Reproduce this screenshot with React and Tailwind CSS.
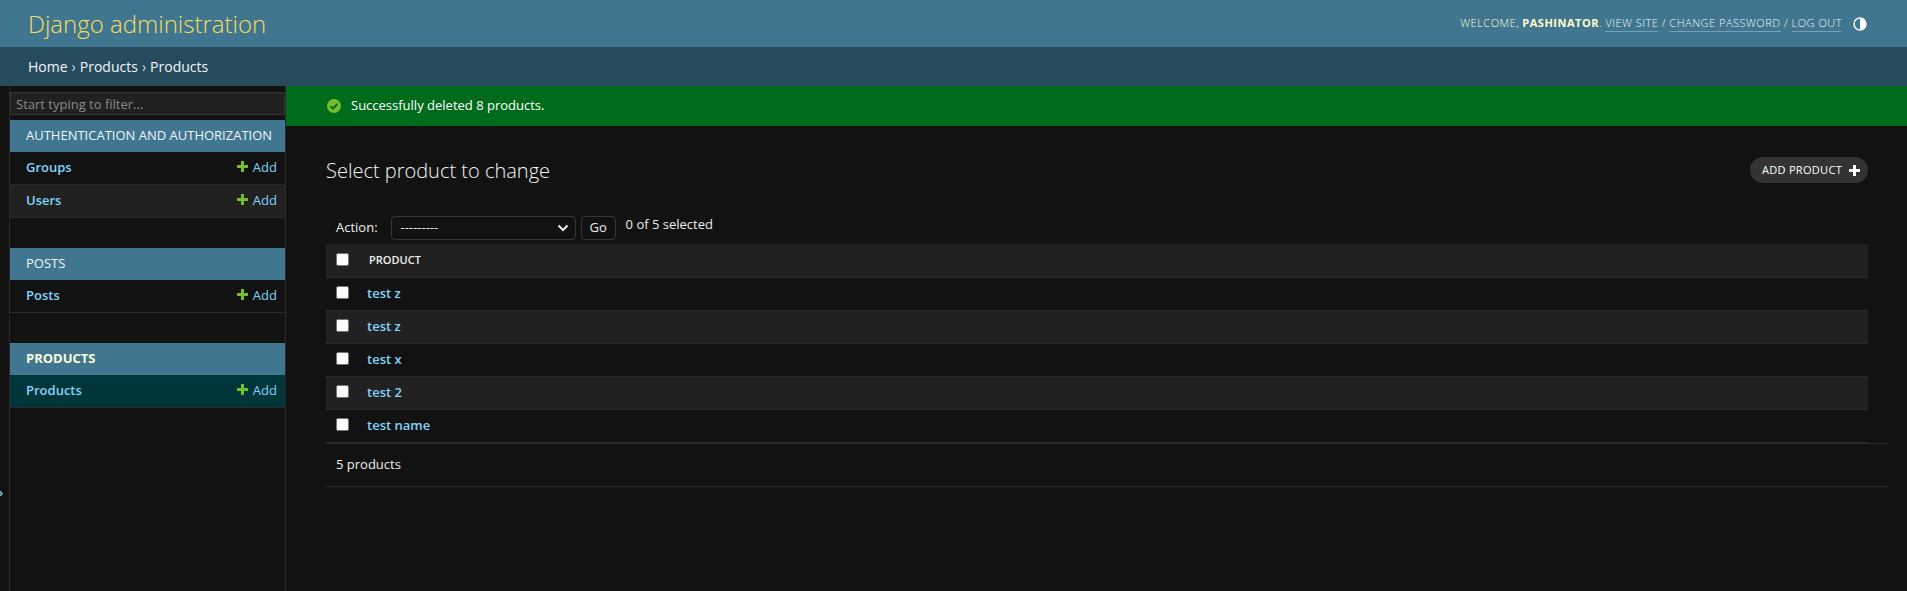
const font = "font-['Open_Sans','Noto_Sans',sans-serif]"

function NavGroup({ title, active, rows }) {
  return (
    <div className="mb-[30px]">
      <div className={`h-8 pl-4 flex items-center bg-[#417690] text-[13px] ${active ? 'font-bold text-[#f5dd5d]/0' : ''}`}>
        <span className={active ? 'text-[#fdfbd8]' : 'text-[#f0f5f7]'}>{title}</span>
      </div>
      {rows.map((r, i) => (
        <div
          key={r}
          className={`h-[33px] pl-4 pr-2 flex items-center justify-between border-b border-[#2a2a2a] ${
            active ? 'bg-[#00363a]' : i % 2 ? 'bg-[#212121]' : 'bg-[#121212]'
          }`}
        >
          <span className="text-[13px] font-semibold text-[#81d4fa]">{r}</span>
          <span className="flex items-center gap-[5px] text-[13px] text-[#81d4fa]">
            <svg width="11" height="11" viewBox="0 0 11 11" className="-mt-1">
              <path d="M4 0h3v4h4v3H7v4H4V7H0V4h4z" fill="#70bf2b" />
            </svg>
            Add
          </span>
        </div>
      ))}
    </div>
  )
}

function Row({ name, shaded }) {
  return (
    <div className={`h-[33px] flex items-center ${shaded ? 'bg-[#212121]' : ''} border-b border-[#2a2a2a]`}>
      <input type="checkbox" className="ml-[10px] -mt-[3px] w-[13px] h-[13px] appearance-none bg-white rounded-[2px] border border-[#767676]" />
      <span className="ml-[18px] text-[13px] font-semibold text-[#81d4fa]">{name}</span>
    </div>
  )
}

export default function App() {
  return (
    <div className={`${font} h-[591px] overflow-hidden flex flex-col bg-[#121212] text-[#eeeeee]`}>
      <div className="h-[47px] shrink-0 bg-[#417690] flex items-center justify-between pl-7 pr-[40px]">
        <span className="text-[24px] font-light text-[#f5dd5d]">Django administration</span>
        <div className="flex items-center text-[11px] font-light text-[#ffffcc] tracking-[0.5px]">
          <span>WELCOME, <b className="font-bold">PASHINATOR</b>.&nbsp;</span>
          <span className="text-[#f0f5f7] border-b border-white/30">VIEW SITE</span>
          <span>&nbsp;/&nbsp;</span>
          <span className="text-[#f0f5f7] border-b border-white/30">CHANGE PASSWORD</span>
          <span>&nbsp;/&nbsp;</span>
          <span className="text-[#f0f5f7] border-b border-white/30">LOG OUT</span>
          <svg width="14" height="14" viewBox="0 0 14 14" className="ml-[11px]">
            <circle cx="7" cy="7" r="6" fill="none" stroke="#fff" strokeWidth="1.4" />
            <path d="M7 1a6 6 0 0 1 0 12z" fill="#fff" />
          </svg>
        </div>
      </div>

      <div className="h-[39px] shrink-0 bg-[#264b5d] flex items-center pl-7 text-[14px] text-[#f0f5f7]">
        Home <span className="mx-1 text-[#c4dce8]">›</span> Products <span className="mx-1 text-[#c4dce8]">›</span> Products
      </div>

      <div className="flex flex-1 min-h-0">
        <div className="w-[10px] shrink-0 border-r border-[#2a2a2a] relative overflow-hidden">
          <span className="absolute -left-[4px] top-[397px] text-[13px] font-semibold text-[#81d4fa]">»</span>
        </div>
        <div className="w-[276px] shrink-0 border-r border-[#2a2a2a] pt-[6px]">
          <input
            placeholder="Start typing to filter..."
            className="block w-full h-[23px] mb-[5px] px-[5px] text-[13px] bg-[#212121] border border-[#353535] placeholder:text-[#8a8a8a] outline-none"
          />
          <NavGroup title="AUTHENTICATION AND AUTHORIZATION" rows={['Groups', 'Users']} />
          <NavGroup title="POSTS" rows={['Posts']} />
          <NavGroup title="PRODUCTS" active rows={['Products']} />
        </div>

        <div className="flex-1 min-w-0">
          <div className="h-10 bg-[#006b1b] flex items-center pl-[41px] text-[13px] text-white">
            <svg width="14" height="14" viewBox="0 0 14 14" className="mr-[10px]">
              <circle cx="7" cy="7" r="7" fill="#70bf2b" />
              <path d="M3.6 7.2 6 9.6l4.4-4.6" fill="none" stroke="#006b1b" strokeWidth="2" />
            </svg>
            Successfully deleted 8 products.
          </div>

          <div className="pl-10 pr-[39px]">
            <div className="flex items-start justify-between pt-[30px]">
              <h1 className="text-[20px] leading-[30px] font-light text-[#f5f5f5]">Select product to change</h1>
              <div className="mt-[1px] h-[26px] pl-[12px] pr-2 rounded-[13px] bg-[#333333] flex items-center gap-[7px] text-[11px] text-white tracking-[0.3px]">
                ADD PRODUCT
                <svg width="11" height="11" viewBox="0 0 11 11">
                  <path d="M4 0h3v4h4v3H7v4H4V7H0V4h4z" fill="#fff" />
                </svg>
              </div>
            </div>

            <div className="mt-[25px] h-[33px] flex items-center pl-[10px] text-[13px]">
              <span>Action:</span>
              <div className="ml-[13px] w-[185px] h-[24px] px-[9px] flex items-center justify-between rounded border border-[#353535] bg-[#121212]">
                <span>---------</span>
                <svg width="12" height="8" viewBox="0 0 12 8" className="-mr-[3px]">
                  <path d="M1.5 1.5 6 6l4.5-4.5" fill="none" stroke="#eee" strokeWidth="2" />
                </svg>
              </div>
              <div className="ml-[5px] w-[35px] h-[24px] flex items-center justify-center rounded border border-[#353535]">Go</div>
              <span className="ml-[10px] -mt-[5px]">0 of 5 selected</span>
            </div>

            <div className="h-[34px] bg-[#212121] flex items-center border-b border-[#2a2a2a]">
              <input type="checkbox" className="ml-[10px] -mt-[3px] w-[13px] h-[13px] appearance-none bg-white rounded-[2px] border border-[#767676]" />
              <span className="ml-[20px] text-[11px] font-semibold text-[#f0f0f0]">PRODUCT</span>
            </div>
            <Row name="test z" />
            <Row name="test z" shaded />
            <Row name="test x" />
            <Row name="test 2" shaded />
            <Row name="test name" />
            <div className="h-[44px] -mr-[20px] border-t border-[#2a2a2a] border-b flex items-center pl-[10px] text-[13px]">5 products</div>
          </div>
        </div>
      </div>
    </div>
  )
}
